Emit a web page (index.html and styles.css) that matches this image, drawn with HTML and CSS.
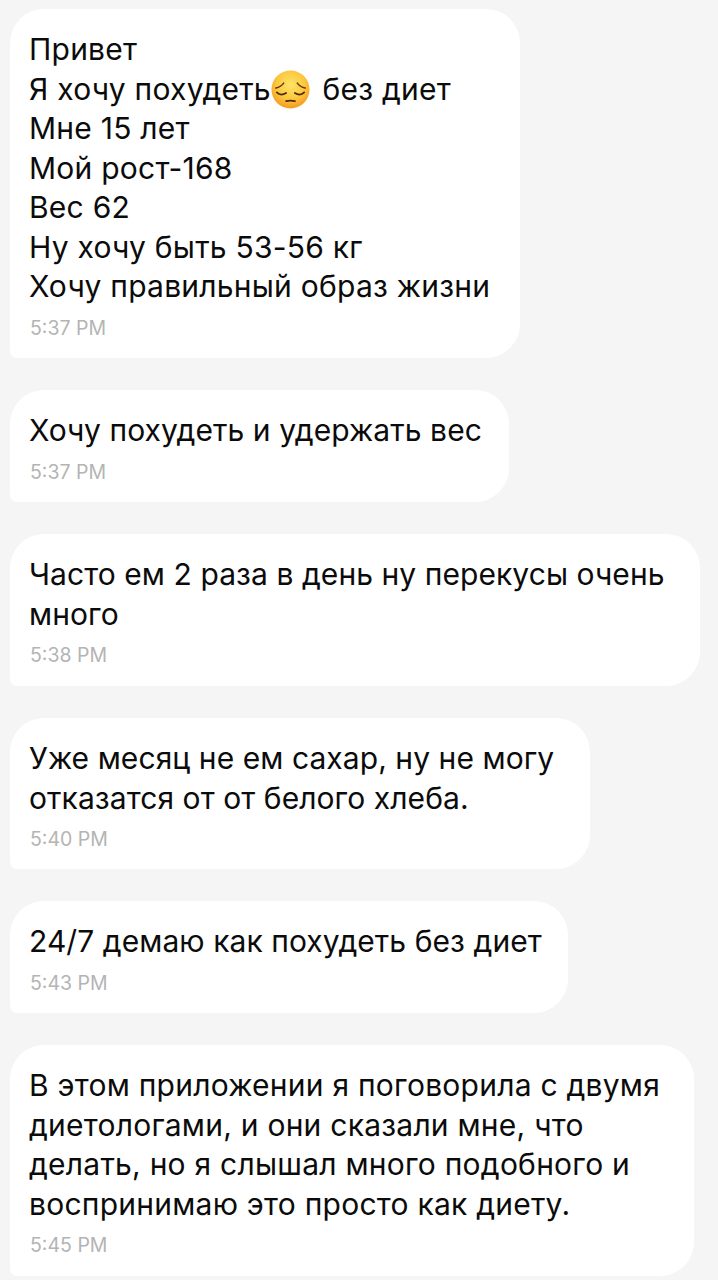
FILE: index.html
```html
<!DOCTYPE html>
<html>
<head>
    <title>Chat</title>
    <link rel="stylesheet" href="styles.css">
</head>
<body>
    <div class="chat">
        <div class="bubble bubble-first wide">
            <p>Привет</p>
            <p>Я хочу похудеть<svg class="emoji" viewBox="0 0 40 40">
                <defs>
                    <radialGradient id="face" cx="50%" cy="38%" r="62%">
                        <stop offset="0%" stop-color="#ffe368"/>
                        <stop offset="60%" stop-color="#fdc73f"/>
                        <stop offset="100%" stop-color="#f49a1e"/>
                    </radialGradient>
                </defs>
                <circle cx="20" cy="20" r="19.500" fill="url(#face)"/>
                <path d="M5 18.500c3-.6 6-2.200 8-5M35 18.500c-3-.6-6-2.200-8-5" fill="none" stroke="#5c3a12" stroke-width="1.600" stroke-linecap="round"/>
                <path d="M6 23c2.500 2.600 6 2.800 9.500.6M34 23c-2.500 2.600-6 2.800-9.500.6" fill="none" stroke="#4a2c0c" stroke-width="1.800" stroke-linecap="round"/>
                <path d="M15.500 32c3-.7 6-.7 9 0" fill="none" stroke="#4a2c0c" stroke-width="1.800" stroke-linecap="round"/>
            </svg> без диет</p>
            <p>Мне 15 лет</p>
            <p>Мой рост-168</p>
            <p>Вес 62</p>
            <p>Ну хочу быть 53-56 кг</p>
            <p>Хочу правильный образ жизни</p>
            <div class="time">5:37 PM</div>
        </div>

        <div class="bubble bubble-second">
            <p>Хочу похудеть и удержать вес</p>
            <div class="time">5:37 PM</div>
        </div>

        <div class="bubble bubble-third">
            <p>Часто ем 2 раза в день ну перекусы очень</p>
            <p>много</p>
            <div class="time">5:38 PM</div>
        </div>

        <div class="bubble bubble-fourth">
            <p>Уже месяц не ем сахар, ну не могу</p>
            <p>отказатся от от белого хлеба.</p>
            <div class="time">5:40 PM</div>
        </div>

        <div class="bubble bubble-fifth">
            <p>24/7 демаю как похудеть без диет</p>
            <div class="time">5:43 PM</div>
        </div>

        <div class="bubble bubble-sixth wide">
            <p>В этом приложении я поговорила с двумя</p>
            <p>диетологами, и они сказали мне, что</p>
            <p>делать, но я слышал много подобного и</p>
            <p>воспринимаю это просто как диету.</p>
            <div class="time">5:45 PM</div>
        </div>
    </div>
</body>
</html>
```

FILE: styles.css
```css
html, body {
    margin: 0;
    background-color: #f5f5f5;
}

body {
    font-family: Inter, "Noto Sans", sans-serif;
    color: #0b0b0b;
    overflow: hidden;
    height: 1280px;
}

.chat {
    display: flex;
    flex-direction: column;
    align-items: flex-start;
    gap: 32px;
    padding: 9px 0 0 10px;
}

.bubble {
    background-color: #fff;
    border-radius: 34px 34px 34px 7px;
    padding: 21px 19px 18px 20px;
    box-sizing: border-box;
}

.bubble p {
    margin: 0;
    margin-left: -1px;
    font-size: 30px;
    line-height: 39.500px;
    letter-spacing: 0.07px;
    white-space: nowrap;
}

.bubble.wide p {
    letter-spacing: 0.24px;
}

.time {
    margin-top: 9px;
    font-size: 19.500px;
    line-height: 24px;
    color: #b4b4b4;
}

.emoji {
    width: 39px;
    height: 39px;
    vertical-align: -9px;
    margin-right: 4px;
}

.bubble-first { width: 510px; height: 349px; }
.bubble-second { width: 499px; height: 112px; }
.bubble-third { width: 690px; height: 152px; }
.bubble-fourth { width: 580px; height: 151px; }
.bubble-fifth { width: 558px; height: 112px; }
.bubble-sixth { width: 684px; height: 231px; }
```
